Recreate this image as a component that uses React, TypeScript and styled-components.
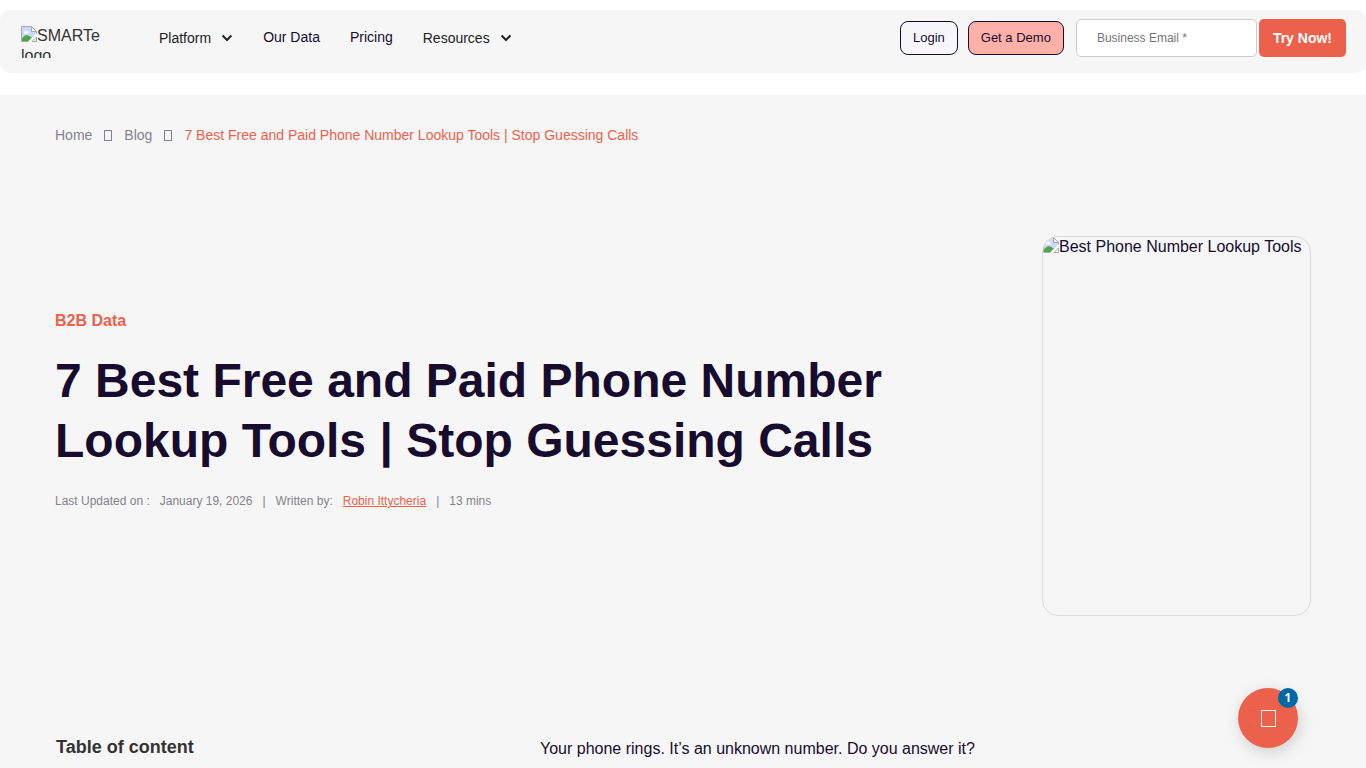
import React from "react";
import styled, { createGlobalStyle } from "styled-components";

const sans = '"Liberation Sans", Arial, sans-serif';
const coral = "#ec614b";
const ink = "#170c2e";

const GlobalStyle = createGlobalStyle`
  *, *::before, *::after { box-sizing: border-box; }
  body {
    margin: 0;
    background: #fff;
    color: ${ink};
    font: 16px/20px ${sans};
  }
  h1, h2, p, ol, ul { margin: 0; padding: 0; }
  ol, ul { list-style: none; }
  a { color: inherit; text-decoration: none; }
`;

const Page = styled.div`
  display: flex;
  flex-direction: column;
  gap: 22px;
  min-height: 100vh;
  padding-top: 10px;
`;

const Header = styled.header`
  display: flex;
  align-items: flex-start;
  padding: 9px 20px 15px 21px;
  border-radius: 10px;
  background: #f6f6f6;
`;

const Logo = styled.a`
  display: block;
  width: 92px;
  height: 32px;
  margin-top: 7px;
  overflow: hidden;
  color: #333;
`;

const BrokenIcon = styled.svg`
  width: 16px;
  height: 16px;
  vertical-align: -1px;
`;

const Nav = styled.nav`
  display: flex;
  align-items: flex-start;
  gap: 30px;
  margin: 8px auto 0 46px;
  font-size: 14px;
`;

const NavLink = styled.a``;

const NavToggle = styled.button`
  display: flex;
  align-items: center;
  gap: 10px;
  margin-top: 1px;
  padding: 0;
  border: 0;
  background: none;
  color: #222;
  font: 14px/20px ${sans};
`;

const ChevronIcon = styled.svg`
  width: 12px;
  height: 8px;
`;

const Actions = styled.div`
  display: flex;
  align-items: flex-start;
  gap: 10px;
`;

const PillLink = styled.a<{ $filled?: boolean }>`
  margin-top: 2px;
  padding: 6px 12px;
  border: 1px solid ${ink};
  border-radius: 8px;
  background: ${(p) => (p.$filled ? "#ffb0a8" : "#f7f7fb")};
  font-size: 13px;
`;

const EmailForm = styled.form`
  display: flex;
  gap: 2px;
  margin-left: 2px;
`;

const EmailInput = styled.input`
  width: 181px;
  height: 38px;
  padding: 0 20px;
  border: 1px solid #ccc;
  border-radius: 5px;
  background: #fff;
  font: 12px/20px ${sans};
  &::placeholder { color: #757575; }
`;

const SubmitButton = styled.button`
  height: 38px;
  padding: 0 14px;
  border: 0;
  border-radius: 5px;
  background: ${coral};
  color: #fff;
  font: 700 14px/20px ${sans};
`;

const Main = styled.main`
  flex: 1;
  padding: 30px 55px 9px;
  background: #f6f6f6;
`;

const Breadcrumb = styled.ol`
  display: flex;
  align-items: center;
  gap: 12px;
  color: #84828d;
  font-size: 14px;
`;

const Crumb = styled.li<{ $current?: boolean }>`
  display: flex;
  align-items: center;
  gap: 12px;
  color: ${(p) => (p.$current ? coral : "inherit")};
`;

const GlyphBox = styled.span<{ $large?: boolean }>`
  width: ${(p) => (p.$large ? 15 : 8)}px;
  height: ${(p) => (p.$large ? 17 : 11)}px;
  border: 1px solid currentColor;
`;

const Hero = styled.section`
  display: flex;
  align-items: center;
  justify-content: space-between;
  gap: 40px;
  margin-top: 91px;
`;

const HeroText = styled.div`
  flex: 0 1 860px;
  padding-bottom: 30px;
`;

const Category = styled.a`
  display: block;
  color: ${coral};
  font-weight: 700;
`;

const Title = styled.h1`
  margin-top: 20px;
  font-size: 48px;
  line-height: 60px;
`;

const Meta = styled.p`
  display: flex;
  gap: 10px;
  margin-top: 20px;
  color: #84828d;
  font-size: 12px;
`;

const Author = styled.a`
  color: ${coral};
  text-decoration: underline;
`;

const Cover = styled.div`
  flex: 0 0 269px;
  height: 380px;
  overflow: hidden;
  border: 1px solid #dcdce0;
  border-radius: 16px;
  white-space: nowrap;
`;

const Article = styled.section`
  display: grid;
  grid-template-columns: 445px 1fr;
  gap: 40px;
  margin-top: 121px;
`;

const TocTitle = styled.h2`
  padding-left: 1px;
  color: #333;
  font-size: 18px;
  line-height: 20px;
`;

const Paragraph = styled.p`
  padding-top: 2px;
`;

const ChatButton = styled.button`
  position: fixed;
  right: 68px;
  bottom: 20px;
  display: flex;
  align-items: center;
  justify-content: center;
  width: 60px;
  height: 60px;
  padding: 0;
  border: 0;
  border-radius: 50%;
  background: ${coral};
  box-shadow: 2px 4px 16px rgba(0, 0, 0, 0.16);
  color: #fff;
`;

const Badge = styled.span`
  position: absolute;
  top: 0;
  right: 0;
  width: 20px;
  height: 20px;
  border-radius: 50%;
  background: #0068a5;
  font: 700 12px/20px "Open Sans", sans-serif;
  text-align: center;
`;

function Chevron() {
  return (
    <ChevronIcon viewBox="0 0 12 8" aria-hidden="true">
      <path d="M1.6 1.5 6 6l4.400-4.500" fill="none" stroke="currentColor" strokeWidth="2" />
    </ChevronIcon>
  );
}

function BrokenImage() {
  return (
    <BrokenIcon viewBox="0 0 16 16" aria-hidden="true">
      <path d="M.5.500h10l5 5V8l-7 7.500h-8z" fill="#c8d8fa" />
      <path d="M1 15v-2c2-4 5-4.500 8-2.500l2 1L7.500 15z" fill="#51a548" />
      <path d="M3 6.500c0-1 1-1.500 1.800-1.200C5.500 4 7.500 4.500 7.500 6c1 0 1.200 1.500 0 1.500H3.500C3 7.500 2.800 7 3 6.500z" fill="#fff" />
      <path d="M10.500.500v5h5z" fill="#fff" />
      <path d="M15.500 8V5.500l-5-5H.5v15H8M10.500.500v5h5M11 15.500h4.500V11z" fill="none" stroke="#a9abb0" />
      <path d="m8 16 8-8" stroke="#f6f6f6" strokeWidth="2" />
    </BrokenIcon>
  );
}

export default function App() {
  return (
    <>
      <GlobalStyle />
      <Page>
        <Header>
          <Logo href="#"><BrokenImage />SMARTe logo</Logo>
          <Nav>
            <NavToggle type="button">Platform<Chevron /></NavToggle>
            <NavLink href="#">Our Data</NavLink>
            <NavLink href="#">Pricing</NavLink>
            <NavToggle type="button">Resources<Chevron /></NavToggle>
          </Nav>
          <Actions>
            <PillLink href="#">Login</PillLink>
            <PillLink href="#" $filled>Get a Demo</PillLink>
            <EmailForm onSubmit={(e) => e.preventDefault()}>
              <EmailInput type="email" aria-label="Business Email" placeholder="Business Email *" />
              <SubmitButton type="submit">Try Now!</SubmitButton>
            </EmailForm>
          </Actions>
        </Header>
        <Main>
          <nav aria-label="Breadcrumb">
            <Breadcrumb>
              <Crumb><a href="#">Home</a><GlyphBox /></Crumb>
              <Crumb><a href="#">Blog</a><GlyphBox /></Crumb>
              <Crumb $current aria-current="page">7 Best Free and Paid Phone Number Lookup Tools | Stop Guessing Calls</Crumb>
            </Breadcrumb>
          </nav>
          <Hero>
            <HeroText>
              <Category href="#">B2B Data</Category>
              <Title>7 Best Free and Paid Phone Number Lookup Tools | Stop Guessing Calls</Title>
              <Meta>
                <span>Last Updated on :</span>
                <span>January 19, 2026</span>
                <span>|</span>
                <span>Written by:</span>
                <Author href="#">Robin Ittycheria</Author>
                <span>|</span>
                <span>13 mins</span>
              </Meta>
            </HeroText>
            <Cover><BrokenImage />Best Phone Number Lookup Tools</Cover>
          </Hero>
          <Article>
            <TocTitle>Table of content</TocTitle>
            <Paragraph>Your phone rings. It’s an unknown number. Do you answer it?</Paragraph>
          </Article>
        </Main>
      </Page>
      <ChatButton type="button" aria-label="Open chat">
        <GlyphBox $large />
        <Badge>1</Badge>
      </ChatButton>
    </>
  );
}
